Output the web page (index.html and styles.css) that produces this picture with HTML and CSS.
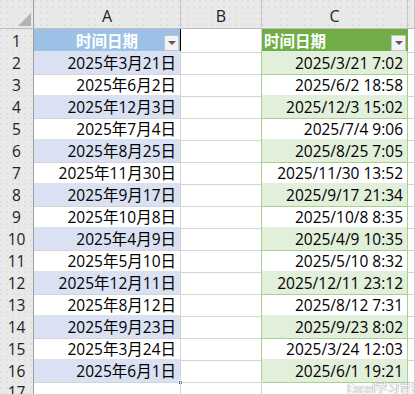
FILE: index.html
```html
<!DOCTYPE html>
<html lang="zh-CN">
<head>
<meta charset="utf-8">
<title>时间日期</title>
<link rel="stylesheet" href="styles.css">
</head>
<body>
<div class="sheet">
  <div class="row hdr-row">
    <div class="corner"><svg class="tri" width="13" height="13" viewBox="0 0 13 13"><polygon points="13,0 13,13 0,13" fill="#b3b3b3"/></svg></div>
    <div class="colhdr">A</div>
    <div class="colhdr">B</div>
    <div class="colhdr">C</div>
    <div class="colhdr last"></div>
  </div>

  <div class="row">
    <div class="rh">1</div>
    <div class="cell a-head">时间日期<span class="filter"></span></div>
    <div class="cell b"></div>
    <div class="cell c-head">时间日期<span class="filter"></span></div>
    <div class="cell d"></div>
  </div>
  <div class="row"><div class="rh">2</div><div class="cell a band">2025年3月21日</div><div class="cell b edge"></div><div class="cell c band">2025/3/21 7:02</div><div class="cell d"></div></div>
  <div class="row"><div class="rh">3</div><div class="cell a">2025年6月2日</div><div class="cell b edge"></div><div class="cell c">2025/6/2 18:58</div><div class="cell d"></div></div>
  <div class="row"><div class="rh">4</div><div class="cell a band">2025年12月3日</div><div class="cell b edge"></div><div class="cell c band">2025/12/3 15:02</div><div class="cell d"></div></div>
  <div class="row"><div class="rh">5</div><div class="cell a">2025年7月4日</div><div class="cell b edge"></div><div class="cell c">2025/7/4 9:06</div><div class="cell d"></div></div>
  <div class="row"><div class="rh">6</div><div class="cell a band">2025年8月25日</div><div class="cell b edge"></div><div class="cell c band">2025/8/25 7:05</div><div class="cell d"></div></div>
  <div class="row"><div class="rh">7</div><div class="cell a">2025年11月30日</div><div class="cell b edge"></div><div class="cell c">2025/11/30 13:52</div><div class="cell d"></div></div>
  <div class="row"><div class="rh">8</div><div class="cell a band">2025年9月17日</div><div class="cell b edge"></div><div class="cell c band">2025/9/17 21:34</div><div class="cell d"></div></div>
  <div class="row"><div class="rh">9</div><div class="cell a">2025年10月8日</div><div class="cell b edge"></div><div class="cell c">2025/10/8 8:35</div><div class="cell d"></div></div>
  <div class="row"><div class="rh">10</div><div class="cell a band">2025年4月9日</div><div class="cell b edge"></div><div class="cell c band">2025/4/9 10:35</div><div class="cell d"></div></div>
  <div class="row"><div class="rh">11</div><div class="cell a">2025年5月10日</div><div class="cell b edge"></div><div class="cell c">2025/5/10 8:32</div><div class="cell d"></div></div>
  <div class="row"><div class="rh">12</div><div class="cell a band">2025年12月11日</div><div class="cell b edge"></div><div class="cell c band">2025/12/11 23:12</div><div class="cell d"></div></div>
  <div class="row"><div class="rh">13</div><div class="cell a">2025年8月12日</div><div class="cell b edge"></div><div class="cell c">2025/8/12 7:31</div><div class="cell d"></div></div>
  <div class="row"><div class="rh">14</div><div class="cell a band">2025年9月23日</div><div class="cell b edge"></div><div class="cell c band">2025/9/23 8:02</div><div class="cell d"></div></div>
  <div class="row"><div class="rh">15</div><div class="cell a">2025年3月24日</div><div class="cell b edge"></div><div class="cell c">2025/3/24 12:03</div><div class="cell d"></div></div>
  <div class="row"><div class="rh">16</div><div class="cell a band">2025年6月1日<span class="handle"></span></div><div class="cell b edge"></div><div class="cell c band">2025/6/1 19:21</div><div class="cell d"></div></div>
  <div class="row"><div class="rh">17</div><div class="cell a plain"></div><div class="cell b"></div><div class="cell c plain"></div><div class="cell d"></div></div>

  <div class="watermark">Excel学习世界</div>
</div>
</body>
</html>
```

FILE: styles.css
```css
* { box-sizing: border-box; }
html, body { margin: 0; padding: 0; background: #fff; }
body {
  width: 415px;
  height: 394px;
  overflow: hidden;
  font-family: "Open Sans", "Noto Sans CJK SC", sans-serif;
  font-size: 15.5px;
  color: #000;
}
.sheet { position: relative; width: 415px; height: 394px; overflow: hidden; }
.row {
  display: grid;
  grid-template-columns: 34px 147px 81px 146px 1fr;
  height: 22px;
}
.hdr-row { height: 29px; }

.corner, .colhdr, .rh {
  background-color: #e9e9e9;
  background-image: radial-gradient(circle at 1px 1px, #dadada 0.6px, transparent 0.9px);
  background-size: 6px 6px;
}
.corner {
  border-right: 1px solid #9e9e9e;
  border-bottom: 1px solid #bdbdbd;
  display: flex;
  align-items: flex-end;
  justify-content: flex-end;
  padding: 0 2px 2px 0;
}
.colhdr {
  border-right: 1px solid #c8c8c8;
  border-bottom: 1px solid #bdbdbd;
  display: flex;
  align-items: center;
  justify-content: center;
  padding-top: 4px;
  font-size: 16px;
  color: #222;
}
.rh {
  border-right: 1px solid #9e9e9e;
  border-bottom: 1px solid #d2d2d2;
  display: flex;
  align-items: center;
  justify-content: center;
  font-size: 15.5px;
  color: #222;
}

.cell {
  position: relative;
  border-right: 1px solid #d4d4d4;
  border-bottom: 1px solid #d4d4d4;
  display: flex;
  align-items: center;
  white-space: nowrap;
}
.a, .c { justify-content: flex-end; padding-right: 4px; }
.a.band { background: #d9e1f2; }
.c { border-right-color: #a9d08e; border-bottom-color: #a9d08e; }
.c.band { background: #e2efda; }
.c.plain { border-right-color: #d4d4d4; border-bottom-color: #d4d4d4; }
.b.edge { border-right-color: #a9d08e; }

.a-head {
  background: #9bc2e6;
  color: #fff;
  font-weight: bold;
  justify-content: center;
  border-right-color: #000;
  border-bottom-color: #000;
}
.c-head {
  background: #70ad47;
  color: #fff;
  font-weight: bold;
  justify-content: flex-start;
  padding-left: 2px;
  border-right-color: #70ad47;
  border-bottom-color: #a9d08e;
}
.filter {
  position: absolute;
  right: 1px;
  bottom: 1px;
  width: 15px;
  height: 16px;
  background: #f3f3f3;
  border: 1px solid #c4c4c4;
}
.filter::after {
  content: "";
  position: absolute;
  left: 3px;
  top: 5px;
  border-left: 4px solid transparent;
  border-right: 4px solid transparent;
  border-top: 4px solid #595959;
}
.handle {
  position: absolute;
  right: -3px;
  bottom: -3px;
  width: 5px;
  height: 5px;
  background: #2f6fbd;
  border: 1px solid #fff;
}
.watermark {
  position: absolute;
  left: 347px;
  top: 381px;
  line-height: 14px;
  font-family: "Noto Sans CJK SC", sans-serif;
  font-size: 12px;
  color: #fff;
  text-shadow: 0 0 1px #8a8a8a, 0 0 1px #8a8a8a;
  white-space: nowrap;
}
```
